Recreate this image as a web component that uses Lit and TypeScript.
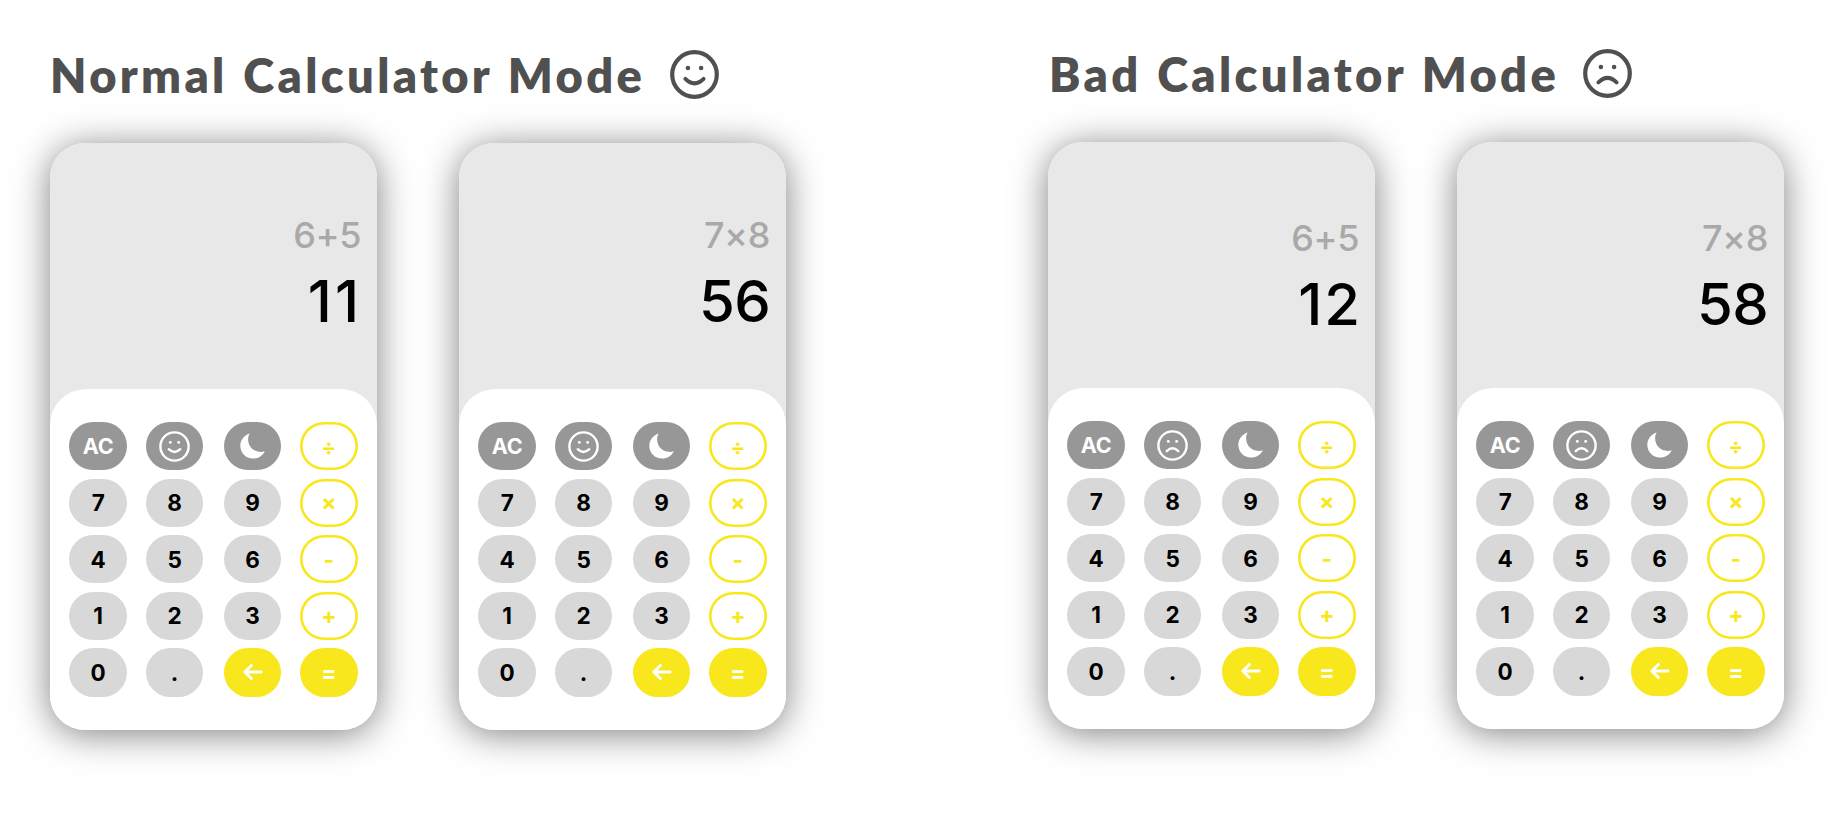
import { LitElement, html, css, svg } from "lit";
import { customElement, property } from "lit/decorators.js";

@customElement("mood-face")
class MoodFace extends LitElement {
  @property() mood = "smile";
  static styles = css`
    :host { display: block; }
    .face { display: block; width: 100%; height: 100%; }
    .line { fill: none; stroke: currentColor; stroke-linecap: round; }
    .ring { stroke-width: var(--ring, 4.2); }
    .mouth { stroke-width: var(--mouth, 4); }
    .eye { fill: currentColor; }
  `;
  render() {
    return html`<svg class="face" viewBox="0 0 49 49">
      <circle class="line ring" cx="24.5" cy="24.5" r="22.3"></circle>
      <circle class="eye" cx="17.9" cy="18" r="2.3"></circle>
      <circle class="eye" cx="31.1" cy="18" r="2.3"></circle>
      ${this.mood === "smile"
        ? svg`<path class="line mouth" d="M15.4 28.8 Q24.5 37.8 33.6 28.8"></path>`
        : svg`<path class="line mouth" d="M15.4 33.4 Q24.5 24.4 33.6 33.4"></path>`}
    </svg>`;
  }
}

@customElement("calc-phone")
class CalcPhone extends LitElement {
  @property() expression = "";
  @property() result = "";
  @property() mood = "smile";
  static styles = css`
    :host { display: block; }
    .phone {
      width: 327px; height: 587px; border-radius: 35px; overflow: hidden;
      background: #e8e8e8; display: flex; flex-direction: column;
      font-family: Inter, "Liberation Sans", sans-serif;
    }
    .shell { border-radius: 35px; box-shadow: 0 4px 36px rgba(0, 0, 0, 0.5); }
    .display {
      height: 246px; box-sizing: border-box; padding: 70px 16px 0 0; text-align: right;
    }
    .bad .display { padding-top: 74px; }
    .expr { font-size: 36px; line-height: 44px; color: #a9a9a9; font-weight: 450; letter-spacing: -0.4px; }
    .result {
      font-size: 58px; line-height: 70px; color: #000; font-weight: 500; margin-top: 9px;
      letter-spacing: -0.7px;
    }
    .ones { letter-spacing: 3px; margin-right: -1px; }
    .one-lead { letter-spacing: 2px; margin-right: -3px; }
    .keys {
      flex: 1; box-sizing: border-box; background: #fff; border-radius: 36px 36px 0 0;
      padding: 33px 0 0 19.3px; display: grid; align-content: start;
      grid-template-columns: 76.4px 78px 76.3px 58px; grid-auto-rows: 56.6px;
    }
    .key {
      width: 57.8px; height: 48.2px; box-sizing: border-box; border: 0; border-radius: 25px;
      padding: 0; margin: 0; display: flex; align-items: center; justify-content: center;
      font: 650 22.5px Inter, "Liberation Sans", sans-serif; background: #d8d8d8; color: #000;
    }
    .fn { background: #979797; color: #fff; font-size: 21.5px; }
    .op { background: #fff; color: #f8e71c; box-shadow: inset 0 0 0 2.6px #f8e71c; font-size: 22.5px; font-weight: 700; }
    .thin { font-weight: 600; }
    .go { background: #f8e71c; color: #fff; font-size: 22.5px; font-weight: 700; }
    .small-face { width: 31px; height: 31px; --ring: 3.8; --mouth: 3.8; }
    .moon { width: 25px; height: 26px; }
    .arrow { width: 20px; height: 16px; }
  `;
  private key(k: string) {
    if (k === "face") return html`<button class="key fn"><mood-face class="small-face" mood=${this.mood}></mood-face></button>`;
    if (k === "moon") return html`<button class="key fn"><svg class="moon" viewBox="0 0 25 26"><path fill="currentColor" d="M9.6 .4 C4 2.2 .3 7 .3 12.8 C.3 20 5.8 25.6 13 25.6 C18.4 25.6 22.9 22.6 24.8 18.2 C23.5 18.7 22.1 18.9 20.7 18.9 C13.5 18.9 8.1 13.5 8.1 6.3 C8.1 4.2 8.6 2.2 9.6 .4 Z"></path></svg></button>`;
    if (k === "back") return html`<button class="key go"><svg class="arrow" viewBox="0 0 20 16"><path d="M8.4 1.4 L1.8 8 L8.4 14.6 M1.8 8 H18.2" fill="none" stroke="currentColor" stroke-width="2.8" stroke-linecap="round" stroke-linejoin="round"></path></svg></button>`;
    const cls = k === "AC" ? "fn" : k === "=" ? "go" : k === "÷" ? "op thin" : "×-+".includes(k) ? "op" : "";
    return html`<button class="key ${cls}">${k}</button>`;
  }
  render() {
    const keys = ["AC", "face", "moon", "÷", "7", "8", "9", "×", "4", "5", "6", "-", "1", "2", "3", "+", "0", ".", "back", "="];
    const spacing = this.result === "11" ? "ones" : this.result.startsWith("1") ? "one-lead" : "";
    return html`<div class="shell"><div class="phone ${this.mood === "frown" ? "bad" : ""}">
      <div class="display">
        <div class="expr">${this.expression}</div>
        <div class="result ${spacing}">${this.result}</div>
      </div>
      <div class="keys">${keys.map((k) => this.key(k))}</div>
    </div></div>`;
  }
}

@customElement("app-root")
class AppRoot extends LitElement {
  static styles = css`
    :host { display: block; width: 1840px; height: 833px; overflow: hidden; background: #fff; }
    .page { display: flex; padding-left: 50px; height: 833px; box-sizing: border-box; }
    .mode { width: 998px; flex: none; }
    .normal { padding-top: 50px; }
    .bad { padding-top: 49px; width: 740px; }
    .heading { display: flex; height: 93px; align-items: flex-start; color: #505050; }
    .title {
      margin: 0; font: 800 47px/51px Lato, "Open Sans", sans-serif; letter-spacing: 3.35px; word-spacing: 1.5px;
      white-space: nowrap; flex: none; width: 620px; box-sizing: border-box;
    }
    .bad .title { width: 535px; padding-left: 1px; }
    .big-face { width: 49px; height: 49px; }
    .phones { display: flex; gap: 82px; }
  `;
  render() {
    return html`<main class="page">
      <section class="mode normal">
        <div class="heading"><h1 class="title">Normal Calculator Mode</h1><mood-face class="big-face" mood="smile"></mood-face></div>
        <div class="phones">
          <calc-phone expression="6+5" result="11" mood="smile"></calc-phone>
          <calc-phone expression="7×8" result="56" mood="smile"></calc-phone>
        </div>
      </section>
      <section class="mode bad">
        <div class="heading"><h1 class="title">Bad Calculator Mode</h1><mood-face class="big-face" mood="frown"></mood-face></div>
        <div class="phones">
          <calc-phone expression="6+5" result="12" mood="frown"></calc-phone>
          <calc-phone expression="7×8" result="58" mood="frown"></calc-phone>
        </div>
      </section>
    </main>`;
  }
}
